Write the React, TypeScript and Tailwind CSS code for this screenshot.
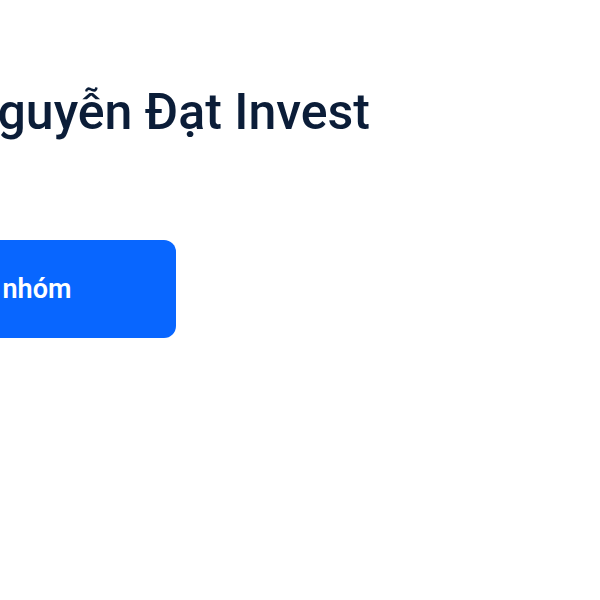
import React from 'react';

const App: React.FC = () => {
  return (
    <div className="w-[600px] h-[600px] bg-white overflow-hidden font-['Roboto',sans-serif]">
      <div className="ml-[-38px] pt-[84px] flex flex-col items-start">
        <h1 className="text-[50px] leading-[56px] font-medium text-[#0b1d38] whitespace-nowrap">
          Nguyễn Đạt Invest
        </h1>
        <button className="mt-[100px] ml-[-184px] w-[398px] h-[98px] rounded-xl bg-[#0866ff] text-white text-[27px] font-semibold flex items-center justify-center whitespace-nowrap">
          Tham gia nhóm
        </button>
      </div>
    </div>
  );
};

export default App;
